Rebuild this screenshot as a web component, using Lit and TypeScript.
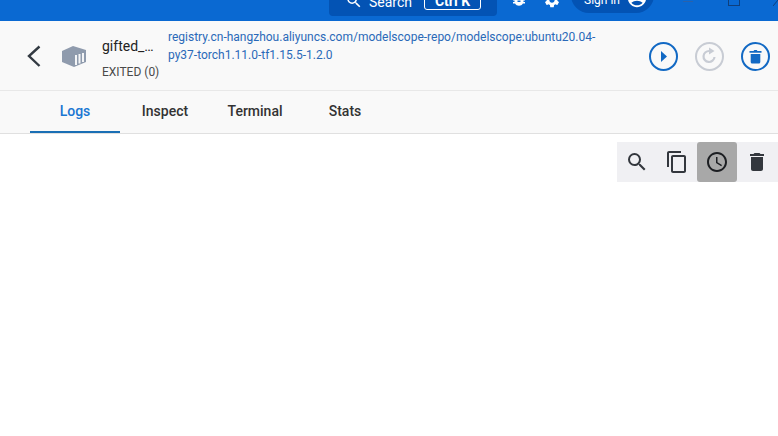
import { LitElement, html, css } from "lit";
import { customElement } from "lit/decorators.js";

@customElement("app-root")
export class AppRoot extends LitElement {
  static styles = css`
    :host { display: block; width: 778px; height: 436px; overflow: hidden; background: #fff; font-family: Roboto, "Liberation Sans", sans-serif; color: #212121; }
    svg { display: block; flex: none; }
    .top { height: 21px; background: #0a69d2; overflow: hidden; position: relative; }
    .top-row { display: flex; align-items: flex-end; height: 16px; padding-left: 329px; color: #fff; }
    .search { width: 168px; height: 40px; box-sizing: border-box; flex: none; background: #0353b4; border-radius: 4px; display: flex; align-items: flex-end; padding: 0 16px 6px 16px; gap: 6px; font-size: 14px; }
    .search svg { margin-bottom: 0; }
    .search .t { margin-bottom: 0; line-height: 16px; }
    .kbd { border: 1px solid #fff; border-radius: 3px; width: 57px; height: 26px; box-sizing: border-box; display: flex; align-items: flex-end; justify-content: center; padding-bottom: 0; line-height: 16px; font-weight: 700; font-size: 14px; margin-left: 6px; }
    .bug { margin: 0 0 8px 13px; }
    .gear { margin: 0 0 7px 15px; }
    .sign { margin: 0 0 3px 10px; width: 83px; height: 36px; flex: none; box-sizing: border-box; background: #0353b4; border-radius: 18px; display: flex; align-items: flex-end; justify-content: flex-end; gap: 6px; padding: 0 6px 4px 0; font-size: 12px; }
    .sign span { line-height: 14px; margin-bottom: 2px; }
    .win { position: absolute; top: 0; left: 0; right: 0; height: 6px; }
    .min { position: absolute; left: 683px; top: 1px; width: 10px; height: 1px; background: #2a62ab; }
    .max { position: absolute; left: 728px; top: -6px; width: 10px; height: 10px; border: 1px solid #0f3f7c; }
    .x { position: absolute; left: 773px; top: 0; }
    .head { height: 69px; background: #f9f9f9; border-bottom: 1px solid #e8e8e8; display: flex; align-items: stretch; padding-left: 25px; box-sizing: content-box; }
    .back { margin-top: 22px; }
    .box { margin: 22px 0 0 16px; }
    .name { margin-left: 15px; width: 66px; flex: none; }
    .title { font-size: 14px; line-height: 18px; margin-top: 16px; color: #222; }
    .state { font-size: 12px; line-height: 16px; margin-top: 9px; color: #4a4a4a; }
    .image { width: 436px; flex: none; font-size: 12px; line-height: 18px; color: #2a69b8; margin-top: 7px; overflow-wrap: anywhere; }
    .actions { display: flex; gap: 17px; margin: 20.5px 0 0 44.5px; }
    .tabs { height: 42px; background: #f9f9f9; border-bottom: 1px solid #e0e0e0; display: flex; padding-left: 30px; }
    .tab { width: 90px; height: 42px; box-sizing: border-box; display: flex; align-items: center; justify-content: center; padding-bottom: 2px; font-size: 14px; font-weight: 500; color: #333; }
    .tab.on { color: #1976d2; border-bottom: 2px solid #1a6fb5; padding-bottom: 0; }
    .tools-wrap { display: flex; justify-content: flex-end; padding-top: 8px; }
    .tools { display: flex; background: #f0f0f3; width: 161px; height: 40px; }
    .tool { width: 40px; height: 40px; display: flex; align-items: center; justify-content: center; border-radius: 3px; flex: none; }
    .tool.on { background: #a8a8a8; }
  `;

  render() {
    return html`
      <div class="top">
        <div class="top-row">
          <div class="search">
            <svg width="18" height="18" viewBox="0 0 24 24" fill="#fff"><path d="M15.5 14h-.79l-.28-.27A6.47 6.47 0 0 0 16 9.5 6.5 6.5 0 1 0 9.5 16c1.61 0 3.09-.59 4.23-1.57l.27.28v.79l5 4.99L20.49 19l-4.99-5zm-6 0C7.01 14 5 11.99 5 9.5S7.01 5 9.5 5 14 7.01 14 9.5 11.99 14 9.5 14z"/></svg>
            <span class="t">Search</span>
            <span class="kbd">Ctrl K</span>
          </div>
          <svg class="bug" width="18" height="18" viewBox="0 0 24 24" fill="#fff"><path d="M20 8h-2.81a5.98 5.98 0 0 0-1.82-1.96L17 4.41 15.59 3l-2.17 2.17a6 6 0 0 0-2.83 0L8.41 3 7 4.41l1.62 1.63C7.88 6.55 7.26 7.22 6.81 8H4v2h2.09c-.05.33-.09.66-.09 1v1H4v2h2v1c0 .34.04.67.09 1H4v2h2.81c1.04 1.79 2.97 3 5.19 3s4.15-1.21 5.19-3H20v-2h-2.09c.05-.33.09-.66.09-1v-1h2v-2h-2v-1c0-.34-.04-.67-.09-1H20V8zm-6 8h-4v-2h4v2zm0-4h-4v-2h4v2z"/></svg>
          <svg class="gear" width="18" height="18" viewBox="0 0 24 24" fill="#fff"><path d="M19.14 12.94c.04-.3.06-.61.06-.94 0-.32-.02-.64-.07-.94l2.03-1.58a.49.49 0 0 0 .12-.61l-1.92-3.32a.488.488 0 0 0-.59-.22l-2.39.96c-.5-.38-1.03-.7-1.62-.94l-.36-2.54a.484.484 0 0 0-.48-.41h-3.84c-.24 0-.43.17-.47.41l-.36 2.54c-.59.24-1.13.57-1.62.94l-2.39-.96c-.22-.08-.47 0-.59.22L2.74 8.87c-.12.21-.08.47.12.61l2.03 1.58c-.05.3-.09.63-.09.94s.02.64.07.94l-2.03 1.58a.49.49 0 0 0-.12.61l1.92 3.32c.12.22.37.29.59.22l2.39-.96c.5.38 1.03.7 1.62.94l.36 2.54c.05.24.24.41.48.41h3.84c.24 0 .44-.17.47-.41l.36-2.54c.59-.24 1.13-.56 1.62-.94l2.39.96c.22.08.47 0 .59-.22l1.92-3.32c.12-.22.07-.47-.12-.61l-2.01-1.58zM12 15.6c-1.98 0-3.6-1.62-3.6-3.6s1.62-3.6 3.6-3.6 3.6 1.62 3.6 3.6-1.62 3.6-3.6 3.6z"/></svg>
          <div class="sign">
            <span>Sign in</span>
            <svg width="22" height="22" viewBox="0 0 24 24" fill="#fff"><path d="M12 2C6.48 2 2 6.48 2 12s4.48 10 10 10 10-4.48 10-10S17.52 2 12 2zm0 4c1.93 0 3.5 1.57 3.5 3.5S13.93 13 12 13s-3.5-1.57-3.5-3.5S10.07 6 12 6zm0 14c-2.03 0-4.43-.82-6.14-2.88C7.55 15.8 9.68 15 12 15s4.45.8 6.14 2.12C16.43 19.18 14.03 20 12 20z"/></svg>
          </div>
        </div>
        <div class="win">
          <div class="min"></div>
          <div class="max"></div>
          <svg class="x" width="5" height="6" viewBox="0 0 5 6"><path d="M0 6 L5 0" stroke="#0f3f7c" stroke-width="1"/></svg>
        </div>
      </div>

      <div class="head">
        <svg class="back" width="20" height="26" viewBox="0 0 20 26" fill="none"><path d="M14.5 3.5 L4 13 L14.5 23" stroke="#333a42" stroke-width="2.4"/></svg>
        <svg class="box" width="26" height="26" viewBox="0 0 26 26">
          <path d="M1 8 L12 3 L25 7 L25 19 L13 24 L1 19 Z" fill="#8f9bad"/>
          <path d="M14 12 h2 v10 h-2z M17.5 11 h2 v9.5 h-2z M21 10 h2 v9 h-2z" fill="#f4f5f7"/>
        </svg>
        <div class="name">
          <div class="title">gifted_…</div>
          <div class="state">EXITED (0)</div>
        </div>
        <div class="image">registry.cn-hangzhou.aliyuncs.com/modelscope-repo/modelscope:ubuntu20.04-py37-torch1.11.0-tf1.15.5-1.2.0</div>
        <div class="actions">
          <svg width="29" height="29" viewBox="0 0 29 29"><circle cx="14.5" cy="14.5" r="13.5" fill="none" stroke="#1269c4" stroke-width="2"/><path d="M12 9 L18 14.5 L12 20 Z" fill="#1269c4"/></svg>
          <svg width="29" height="29" viewBox="0 0 29 29" fill="none"><circle cx="14.5" cy="14.5" r="13.5" stroke="#c8ccd4" stroke-width="2"/><path d="M19.5 15 A5.5 5.5 0 1 1 14.5 9" stroke="#c8ccd4" stroke-width="2.2"/><path d="M14 5.5 L19.5 9 L14 12.5 Z" fill="#c8ccd4"/></svg>
          <svg width="29" height="29" viewBox="0 0 29 29"><circle cx="14.5" cy="14.5" r="13.5" fill="none" stroke="#1269c4" stroke-width="2"/><path d="M8.5 9 h4 l.8-1 h2.4 l.8 1 h4 v1.8 h-12z M9.7 12 h9.6 v8 a1.5 1.5 0 0 1 -1.5 1.5 h-6.6 a1.5 1.5 0 0 1 -1.5 -1.5z" fill="#1269c4"/></svg>
        </div>
      </div>

      <div class="tabs">
        <div class="tab on">Logs</div>
        <div class="tab">Inspect</div>
        <div class="tab">Terminal</div>
        <div class="tab">Stats</div>
      </div>

      <div class="tools-wrap">
        <div class="tools">
          <div class="tool"><svg width="24" height="24" viewBox="0 0 24 24" fill="#33373d"><path d="M15.5 14h-.79l-.28-.27A6.47 6.47 0 0 0 16 9.5 6.5 6.5 0 1 0 9.5 16c1.61 0 3.09-.59 4.23-1.57l.27.28v.79l5 4.99L20.49 19l-4.99-5zm-6 0C7.01 14 5 11.99 5 9.5S7.01 5 9.5 5 14 7.01 14 9.5 11.99 14 9.5 14z"/></svg></div>
          <div class="tool"><svg width="24" height="24" viewBox="0 0 24 24" fill="#33373d"><path d="M16 1H4c-1.1 0-2 .9-2 2v14h2V3h12V1zm3 4H8c-1.1 0-2 .9-2 2v14c0 1.1.9 2 2 2h11c1.1 0 2-.9 2-2V7c0-1.1-.9-2-2-2zm0 16H8V7h11v14z"/></svg></div>
          <div class="tool on"><svg width="24" height="24" viewBox="0 0 24 24" fill="#1c1e22"><path d="M11.99 2C6.47 2 2 6.48 2 12s4.47 10 9.99 10C17.52 22 22 17.52 22 12S17.52 2 11.99 2zM12 20c-4.42 0-8-3.58-8-8s3.58-8 8-8 8 3.58 8 8-3.58 8-8 8zm.5-13H11v6l5.25 3.15.75-1.23-4.5-2.67z"/></svg></div>
          <div class="tool"><svg width="24" height="24" viewBox="0 0 24 24" fill="#33373d"><path d="M6 19c0 1.1.9 2 2 2h8c1.1 0 2-.9 2-2V7H6v12zM19 4h-3.5l-1-1h-5l-1 1H5v2h14V4z"/></svg></div>
        </div>
      </div>
    `;
  }
}
